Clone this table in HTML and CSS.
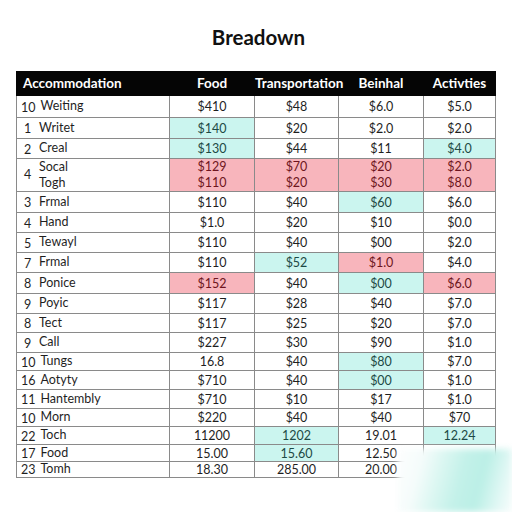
FILE: index.html
```html
<!DOCTYPE html>
<html lang="en">
<head>
    <meta charset="UTF-8">
    <meta name="viewport" content="width=device-width, initial-scale=1.0">
    <title>Breadown</title>
    <link rel="stylesheet" href="styles.css">
</head>
<body>
    <h1 class="title">Breadown</h1>

    <table class="budget">
        <thead>
            <tr>
                <th class="first">Accommodation</th>
                <th>Food</th>
                <th>Transportation</th>
                <th>Beinhal</th>
                <th>Activties</th>
            </tr>
        </thead>
        <tbody>
            <tr class="r22">
                <td class="first"><span class="num">10</span>Weiting</td>
                <td>$410</td><td>$48</td><td>$6.0</td><td>$5.0</td>
            </tr>
            <tr class="r21">
                <td class="first"><span class="num">1</span>Writet</td>
                <td class="cyan">$140</td><td>$20</td><td>$2.0</td><td>$2.0</td>
            </tr>
            <tr class="r20">
                <td class="first"><span class="num">2</span>Creal</td>
                <td class="cyan">$130</td><td>$44</td><td>$11</td><td class="cyan">$4.0</td>
            </tr>
            <tr class="tall">
                <td class="first"><span class="num">4</span><span class="stack">Socal<br>Togh</span></td>
                <td class="pink">$129<br>$110</td>
                <td class="pink">$70<br>$20</td>
                <td class="pink">$20<br>$30</td>
                <td class="pink">$2.0<br>$8.0</td>
            </tr>
            <tr class="r21">
                <td class="first"><span class="num">3</span>Frmal</td>
                <td>$110</td><td>$40</td><td class="cyan">$60</td><td>$6.0</td>
            </tr>
            <tr class="r20">
                <td class="first"><span class="num">4</span>Hand</td>
                <td>$1.0</td><td>$20</td><td>$10</td><td>$0.0</td>
            </tr>
            <tr class="r20">
                <td class="first"><span class="num">5</span>Tewayl</td>
                <td>$110</td><td>$40</td><td>$00</td><td>$2.0</td>
            </tr>
            <tr class="r20">
                <td class="first"><span class="num">7</span>Frmal</td>
                <td>$110</td><td class="cyan">$52</td><td class="pink">$1.0</td><td>$4.0</td>
            </tr>
            <tr class="r21">
                <td class="first"><span class="num">8</span>Ponice</td>
                <td class="pink">$152</td><td>$40</td><td class="cyan">$00</td><td class="pink">$6.0</td>
            </tr>
            <tr class="r20">
                <td class="first"><span class="num">9</span>Poyic</td>
                <td>$117</td><td>$28</td><td>$40</td><td>$7.0</td>
            </tr>
            <tr class="r19">
                <td class="first"><span class="num">8</span>Tect</td>
                <td>$117</td><td>$25</td><td>$20</td><td>$7.0</td>
            </tr>
            <tr class="r20">
                <td class="first"><span class="num">9</span>Call</td>
                <td>$227</td><td>$30</td><td>$90</td><td>$1.0</td>
            </tr>
            <tr class="r18">
                <td class="first"><span class="num">10</span>Tungs</td>
                <td>16.8</td><td>$40</td><td class="cyan">$80</td><td>$7.0</td>
            </tr>
            <tr class="r19">
                <td class="first"><span class="num">16</span>Aotyty</td>
                <td>$710</td><td>$40</td><td class="cyan">$00</td><td>$1.0</td>
            </tr>
            <tr class="r19">
                <td class="first"><span class="num">11</span>Hantembly</td>
                <td>$710</td><td>$10</td><td>$17</td><td>$1.0</td>
            </tr>
            <tr class="r18">
                <td class="first"><span class="num">10</span>Morn</td>
                <td>$220</td><td>$40</td><td>$40</td><td>$70</td>
            </tr>
            <tr class="r18">
                <td class="first"><span class="num">22</span>Toch</td>
                <td>11200</td><td class="cyan">1202</td><td>19.01</td><td class="cyan">12.24</td>
            </tr>
            <tr class="r17">
                <td class="first"><span class="num">17</span>Food</td>
                <td>15.00</td><td class="cyan">15.60</td><td>12.50</td><td></td>
            </tr>
            <tr class="r15">
                <td class="first"><span class="num">23</span>Tomh</td>
                <td>18.30</td><td>285.00</td><td>20.00</td><td></td>
            </tr>
        </tbody>
    </table>

    <div class="wash"></div>
</body>
</html>
```

FILE: styles.css
```css
body {
    margin: 0;
    background: #fff;
    font-family: Lato, "Liberation Sans", sans-serif;
    color: #1f1f1f;
    position: relative;
    width: 512px;
    height: 512px;
    overflow: hidden;
}
.title {
    margin: 0;
    padding-top: 25px;
    padding-left: 5px;
    height: 71px;
    box-sizing: border-box;
    text-align: center;
    font-size: 20.5px;
    line-height: 24px;
    font-weight: 700;
    color: #111;
}
.budget {
    margin-left: 16px;
    width: 480px;
    border-collapse: collapse;
    table-layout: fixed;
    font-size: 12.5px;
}
.budget th,
.budget td {
    border: 1px solid #8a8a8a;
    padding: 0;
    text-align: center;
    line-height: 15px;
}
.budget th {
    background: #050505;
    color: #fff;
    font-weight: 700;
    height: 23px;
    font-size: 13.5px;
    border-color: #050505;
}
.budget th:nth-child(2),
.budget th:nth-child(5) { border-left-color: #777; }
.budget th.first { width: 146px; text-align: left; padding-left: 6px; }
.budget th:nth-child(2) { width: 84px; }
.budget th:nth-child(3) { width: 83px; }
.budget th:nth-child(4) { width: 84px; }
.budget td.first { text-align: left; padding-left: 4px; }
.num {
    display: inline-block;
    min-width: 13px;
    text-align: center;
    margin-right: 5px;
    vertical-align: middle;
}
.stack { display: inline-block; vertical-align: middle; line-height: 16px; }
.r22 td { height: 21px; }
.r21 td { height: 20px; }
.r20 td { height: 19px; }
.r19 td { height: 18px; }
.r18 td { height: 17px; }
.r17 td { height: 16px; }
.r15 td { height: 15px; line-height: 14px; }
.tall td { height: 32px; line-height: 16px; }
.cyan { background: #cbf5ef; color: #1d4a45; }
.pink { background: #f8b5bc; color: #6e1520; }
.wash {
    position: absolute;
    left: 398px;
    top: 449px;
    width: 114px;
    height: 63px;
    background: linear-gradient(105deg, #fdfefe 0%, #f5fcfb 20%, #dcf7f2 36%, #c3f1e9 54%, #bbefe6 70%, #e2f8f5 88%, #f8fdfc 100%);
    filter: blur(3px);
}
```
